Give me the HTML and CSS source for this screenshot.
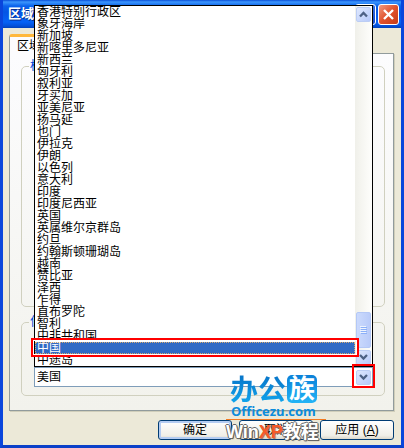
FILE: index.html
```html
<!DOCTYPE html>
<html lang="zh-CN">
<head>
<meta charset="utf-8">
<title>区域和语言选项</title>
<link rel="stylesheet" href="styles.css">
</head>
<body>
<main class="window">
  <header class="titlebar">
    <h1 class="title">区域和语言选项</h1>
    <button class="caption-btn help" type="button" aria-label="帮助"></button>
    <button class="caption-btn close" type="button" aria-label="关闭">
      <svg width="11" height="11" viewBox="0 0 11 11"><path d="M1 1L10 10M10 1L1 10" stroke="#fff" stroke-width="2.4" fill="none"/></svg>
    </button>
  </header>
  <form class="body">
    <div class="tabs"><button class="tab" type="button">区域选项</button></div>
    <section class="page">
      <fieldset class="group standards"><legend>标准和格式</legend></fieldset>
      <fieldset class="group">
        <legend><label for="location">位置</label></legend>
        <div class="combo">
          <select id="location" class="combo-select"><option>美国</option></select>
          <span class="arrow-btn combo-arrow"><svg width="9" height="7" viewBox="0 0 9 7"><path d="M1 1L4.500 4.500L8 1" stroke="#4d6185" stroke-width="2.300" fill="none"/></svg></span>
          <div class="popup">
            <ul class="list" role="listbox" aria-label="位置">
              <li>香港特别行政区</li>
              <li>象牙海岸</li>
              <li>新加坡</li>
              <li>新喀里多尼亚</li>
              <li>新西兰</li>
              <li>匈牙利</li>
              <li>叙利亚</li>
              <li>牙买加</li>
              <li>亚美尼亚</li>
              <li>扬马延</li>
              <li>也门</li>
              <li>伊拉克</li>
              <li>伊朗</li>
              <li>以色列</li>
              <li>意大利</li>
              <li>印度</li>
              <li>印度尼西亚</li>
              <li>英国</li>
              <li>英属维尔京群岛</li>
              <li>约旦</li>
              <li>约翰斯顿珊瑚岛</li>
              <li>越南</li>
              <li>赞比亚</li>
              <li>泽西</li>
              <li>乍得</li>
              <li>直布罗陀</li>
              <li>智利</li>
              <li>中非共和国</li>
              <li class="selected" role="option" aria-selected="true">中国</li>
              <li>中途岛</li>
            </ul>
            <div class="scrollbar">
              <span class="arrow-btn"><svg width="9" height="7" viewBox="0 0 9 7"><path d="M1 5.500L4.500 2L8 5.500" stroke="#4d6185" stroke-width="2.300" fill="none"/></svg></span>
              <span class="track"></span>
              <span class="thumb"><svg width="7" height="8" viewBox="0 0 7 8"><path d="M0 .5H6M0 2.500H6M0 4.500H6M0 6.500H6" stroke="#eef4fe"/><path d="M1 1.500H7M1 3.500H7M1 5.500H7M1 7.500H7" stroke="#8cb0f8"/></svg></span>
              <span class="arrow-btn"><svg width="9" height="7" viewBox="0 0 9 7"><path d="M1 1L4.500 4.500L8 1" stroke="#4d6185" stroke-width="2.300" fill="none"/></svg></span>
            </div>
          </div>
          <span class="mark mark-arrow"></span>
        </div>
      </fieldset>
    </section>
    <footer class="actions">
      <button class="btn default" type="button">确定</button>
      <button class="btn" type="button">取消</button>
      <button class="btn" type="button">应用 (<u>A</u>)</button>
    </footer>
  </form>
  <div class="brand">
    <div class="brand-name"><span class="glyphs">办公</span><span class="tile">族</span></div>
    <div class="brand-url">Officezu.com</div>
    <div class="brand-sub">Win<span class="xp">XP</span>教程</div>
  </div>
</main>
</body>
</html>
```
FILE: styles.css
```css
* { box-sizing: border-box; }
body {
  margin: 0;
  font: 12px/12px "Liberation Sans", "Noto Sans CJK SC", sans-serif;
  color: #000;
  background: #ece9d8;
}
button, select { font: inherit; color: inherit; }
.window {
  position: relative;
  display: flex;
  flex-direction: column;
  min-height: 100vh;
  border: solid #0a46dc;
  border-width: 0 3px 3px;
  border-bottom-color: #0b40c8;
  overflow: hidden;
}
.titlebar {
  display: flex;
  align-items: center;
  gap: 2px;
  height: 28px;
  margin: 0 -3px;
  padding: 0 5px 0 8px;
  background: linear-gradient(#0a50d8 0, #3c96fc 2px, #0a62ec 6px, #0556e4 12px, #0662f6 22px, #0450d8 26px, #0340b8 28px);
}
.title {
  flex: 1;
  margin: 0;
  font-size: 13px;
  line-height: 16px;
  font-weight: 700;
  color: #fff;
  text-shadow: 1px 1px 0 #0a2e8c;
}
.caption-btn {
  display: grid;
  place-items: center;
  width: 21px;
  height: 21px;
  padding: 0;
  border: 1px solid #fff;
  border-radius: 3px;
  background: linear-gradient(135deg, #5a94f4, #1248cc);
}
.close { background: linear-gradient(135deg, #f09a80, #e0512c 50%, #c43c18); }
.body {
  flex: 1;
  display: flex;
  flex-direction: column;
  padding: 6px 7px 5px 6px;
}
.tabs { display: flex; }
.tab {
  position: relative;
  height: 20px;
  margin-bottom: -1px;
  padding: 0 7px;
  border: 1px solid #919b9c;
  border-top: 3px solid #ffb83c;
  border-bottom: 0;
  border-radius: 3px 3px 0 0;
  background: #fcfcfe;
}
.page {
  flex: 1;
  display: flex;
  flex-direction: column;
  gap: 8px;
  padding: 5px 8px 14px 11px;
  border: 1px solid #919b9c;
  box-shadow: 1px 1px 0 #d0ceba;
  background: linear-gradient(#fcfcfe, #f2f2ec);
}
.group {
  min-width: 0;
  margin: 0;
  padding: 38px 11px 8px 12px;
  border: 1px solid #d0d0bf;
  border-radius: 5px;
}
.standards { flex: 1; }
.group legend {
  margin-left: -5px;
  padding: 0 1px;
  line-height: 14px;
  color: #0046d5;
}
.combo {
  position: relative;
  display: flex;
  height: 20px;
  border: 1px solid #7f9db9;
  background: #fff;
}
.combo-select {
  flex: 1;
  appearance: none;
  width: 100%;
  padding: 0 2px;
  border: 0;
  outline: 0;
  background: transparent;
}
.arrow-btn {
  display: grid;
  place-items: center;
  flex: none;
  width: 15px;
  height: 15px;
  border: 1px solid #bccdf4;
  border-radius: 2px;
  background: linear-gradient(135deg, #dfe8fe, #b7cafa);
}
.combo-arrow { align-self: center; margin-right: 1px; pointer-events: none; }
.popup {
  position: absolute;
  left: -1px;
  right: -1px;
  bottom: calc(100% + 1px);
  z-index: 2;
  display: flex;
  border: 1px solid #000;
  background: #fff;
}
.list {
  flex: 1;
  margin: 0;
  padding: 0;
  list-style: none;
}
.list li { height: 12px; padding-left: 2px; }
.list .selected {
  position: relative;
  color: #fff;
  background: #316ac5;
  outline: 1px dotted #d8ab70;
  outline-offset: -1px;
}
.list .selected::after {
  content: "";
  position: absolute;
  inset: -4px -4px -3px;
  border: 2px solid #f00;
  box-shadow: inset 0 0 0 1px #fff;
}
.scrollbar {
  display: flex;
  flex-direction: column;
  gap: 2px;
  width: 17px;
  padding: 1px;
  background: linear-gradient(90deg, #f0f0ea, #fefefc);
}
.track { flex: 1; }
.thumb {
  display: grid;
  place-items: center;
  width: 15px;
  height: 36px;
  border: 1px solid #b4c8f6;
  border-radius: 2px;
  background: linear-gradient(90deg, #cbdafd, #b9cbf9);
}
.mark { position: absolute; border: 2px solid #f00; z-index: 3; }
.mark-arrow { inset: -4px -3px -2px auto; width: 23px; }
.actions {
  display: flex;
  justify-content: flex-end;
  gap: 7px;
  padding-top: 9px;
}
.btn {
  width: 74px;
  height: 20px;
  padding: 0;
  border: 1px solid #003c74;
  border-radius: 3px;
  background: linear-gradient(#fff, #f0efe8 80%, #dcd8cc);
}
.default { box-shadow: inset 0 0 0 2px #b4ccf2; }
.brand {
  position: absolute;
  right: 75px;
  bottom: 1px;
  z-index: 4;
  width: 100px;
  font-family: "Open Sans", "Noto Sans CJK SC", sans-serif;
  font-weight: 700;
  pointer-events: none;
}
.brand-name {
  display: flex;
  align-items: center;
  gap: 1px;
  padding-left: 4px;
  font-size: 28px;
  line-height: 28px;
}
.glyphs {
  color: transparent;
  background: linear-gradient(#0874c8, #10a4ec);
  background-clip: text;
}
.tile {
  width: 30px;
  height: 28px;
  border-radius: 5px;
  font-size: 26px;
  line-height: 26px;
  text-align: center;
  color: #fff;
  background: linear-gradient(#0a80d8, #22b4f6);
}
.brand-url {
  padding-left: 5px;
  font-size: 13px;
  line-height: 16px;
  color: #0c8cdc;
}
.brand-sub {
  border-top: 1px solid #f27a20;
  font-family: "Liberation Sans", "Noto Sans CJK SC", sans-serif;
  font-size: 18px;
  line-height: 24px;
  white-space: nowrap;
  color: #fff;
  text-shadow: 1px 0 #666, -1px 0 #666, 0 1px #666, 0 -1px #666, 1px 1px 1px #444;
}
.xp { color: #f65a28; text-shadow: 1px 1px 1px #a86850; }
```
